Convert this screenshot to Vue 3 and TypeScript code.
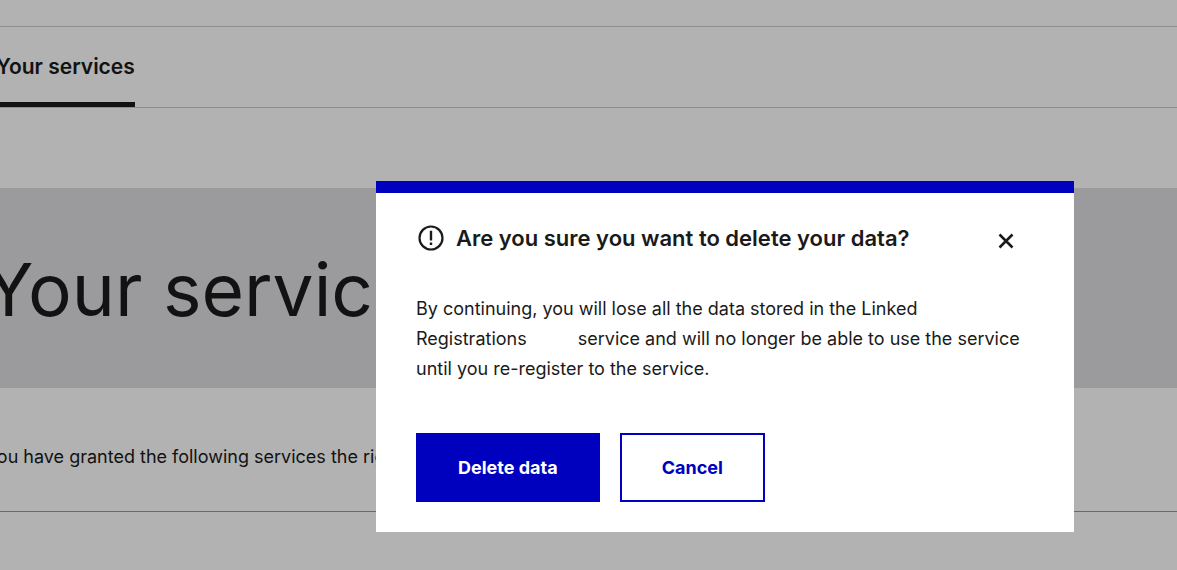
<script setup lang="ts">
import { ref } from 'vue'

const open = ref(true)
const close = (): void => {
  open.value = false
}
</script>

<template>
  <div class="page">
    <header class="header">
      <nav class="nav" aria-label="Main">
        <a class="nav-link" href="#services" aria-current="page">Your services</a>
      </nav>
    </header>
    <main>
      <section class="hero">
        <h1 class="hero-title">Your services</h1>
      </section>
      <section class="intro">
        <p class="intro-text">You have granted the following services the right</p>
      </section>
    </main>

    <div v-if="open" class="overlay">
      <div class="dialog" role="dialog" aria-modal="true" aria-labelledby="dialog-title">
        <div class="dialog-head">
          <svg class="alert-icon" viewBox="0 0 26 26" aria-hidden="true">
            <circle cx="13" cy="13" r="11.5" fill="none" stroke="currentColor" stroke-width="2.2" />
            <path d="M11.8 5.8h2.4v9.6h-2.4zM11.8 17.6h2.4v2.4h-2.4z" fill="currentColor" />
          </svg>
          <h2 id="dialog-title" class="dialog-title">Are you sure you want to delete your data?</h2>
          <button class="close" type="button" aria-label="Close" @click="close">
            <svg class="close-icon" viewBox="0 0 16 16" aria-hidden="true">
              <path d="M1.5 1.5l13 13M14.5 1.5l-13 13" fill="none" stroke="currentColor" stroke-width="2.6" />
            </svg>
          </button>
        </div>
        <p class="dialog-text">
          By continuing, you will lose all the data stored in the Linked Registrations
          <span class="gap"></span>service and will no longer be able to use the service until you re-register to the service.
        </p>
        <div class="actions">
          <button class="button primary" type="button" @click="close">Delete data</button>
          <button class="button secondary" type="button" @click="close">Cancel</button>
        </div>
      </div>
    </div>
  </div>
</template>

<style>
body {
  background: #fff;
  overflow: hidden;
}
</style>

<style scoped>
.page {
  color: #1a1a1a;
  font-family: Inter, "Liberation Sans", sans-serif;
  font-size: 18px;
  line-height: 30px;
}
.header {
  margin-top: 26px;
  border-top: 1px solid #ccc;
  border-bottom: 1px solid #ccc;
}
.nav {
  display: flex;
  margin-left: -4px;
}
.nav-link {
  box-sizing: border-box;
  height: 80px;
  padding-top: 25px;
  border-bottom: 5px solid #1a1a1a;
  color: inherit;
  font-size: 21px;
  font-weight: 600;
  text-decoration: none;
}
.hero {
  margin-top: 80px;
  padding: 62px 0 58px;
  background: #dedfe1;
}
.hero-title {
  margin: 0 0 0 -16px;
  font-size: 73px;
  font-weight: 400;
  line-height: 80px;
}
.intro {
  padding: 54px 0 39px;
  border-bottom: 1px solid #999;
}
.intro-text {
  margin: 0 0 0 -14px;
}
.overlay {
  position: fixed;
  inset: 0;
  display: flex;
  align-items: flex-start;
  padding: 181px 103px 0 376px;
  background: rgba(0, 0, 0, 0.3);
}
.dialog {
  box-sizing: border-box;
  flex: 1;
  padding: 30px 40px;
  border-top: 12px solid #0000bf;
  background: #fff;
}
.dialog-head {
  display: flex;
  align-items: center;
}
.alert-icon {
  width: 26px;
  height: 26px;
  margin: 0 12px 0 2px;
}
.dialog-title {
  flex: 1;
  margin: 0;
  font-size: 22px;
  font-weight: 600;
}
.close {
  display: flex;
  margin: 6px 20px 0 0;
  padding: 0;
  border: 0;
  background: none;
  color: inherit;
  cursor: pointer;
}
.close-icon {
  width: 16px;
  height: 16px;
}
.dialog-text {
  margin: 41px 0 49px;
  padding-right: 8px;
}
.gap {
  display: inline-block;
  width: 46px;
}
.actions {
  display: flex;
  gap: 20px;
}
.button {
  padding: 18px 40px;
  border: 2px solid #0000bf;
  font: 700 18px/29px Inter, "Liberation Sans", sans-serif;
  cursor: pointer;
}
.primary {
  background: #0000bf;
  color: #fff;
}
.secondary {
  background: #fff;
  color: #0000bf;
}
</style>
